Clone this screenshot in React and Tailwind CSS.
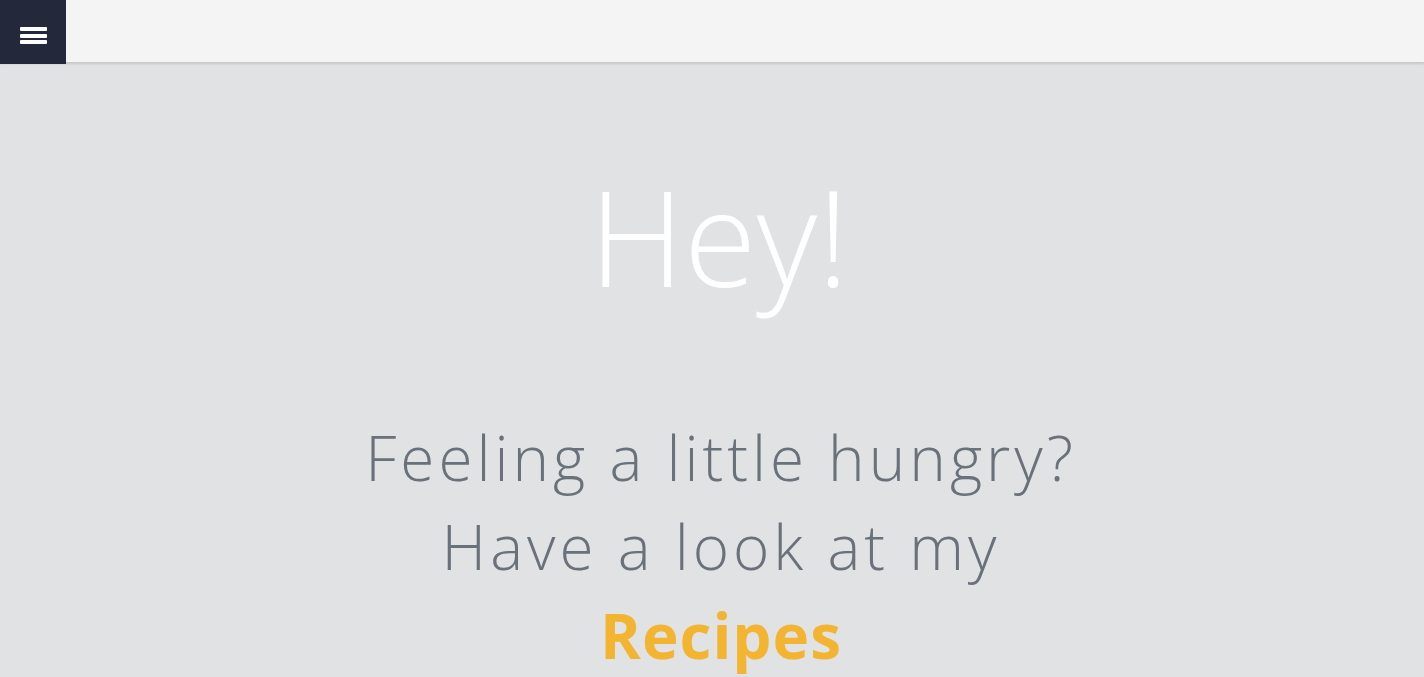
export default function App() {
  return (
    <div className="min-h-screen bg-[#e1e2e4] font-['Open_Sans',sans-serif]">
      <header className="h-[63px] bg-[#f4f4f4] border-b border-[#c9c9c9] shadow-[0_1px_2px_rgba(0,0,0,0.12)] flex">
        <button className="w-[66px] h-[64px] bg-[#23283a] flex flex-col items-center pt-[27px] gap-[2.5px]">
          <span className="block w-[27px] h-[4px] bg-white rounded-[1px]" />
          <span className="block w-[27px] h-[4px] bg-white rounded-[1px]" />
          <span className="block w-[27px] h-[4px] bg-white rounded-[1px]" />
        </button>
      </header>
      <main className="flex flex-col items-center text-center pl-[14px]">
        <h1 className="mt-[83px] text-[132px] leading-[180px] font-light text-white">Hey!</h1>
        <p className="mt-[87px] text-[62px] leading-[89px] font-light text-[#69727a] tracking-[4px] pl-[4px]">
          Feeling a little hungry?
          <br />
          Have a look at my
          <br />
          <a href="#" className="font-bold text-[#f3b431] tracking-[1px]">Recipes</a>
        </p>
      </main>
    </div>
  )
}
